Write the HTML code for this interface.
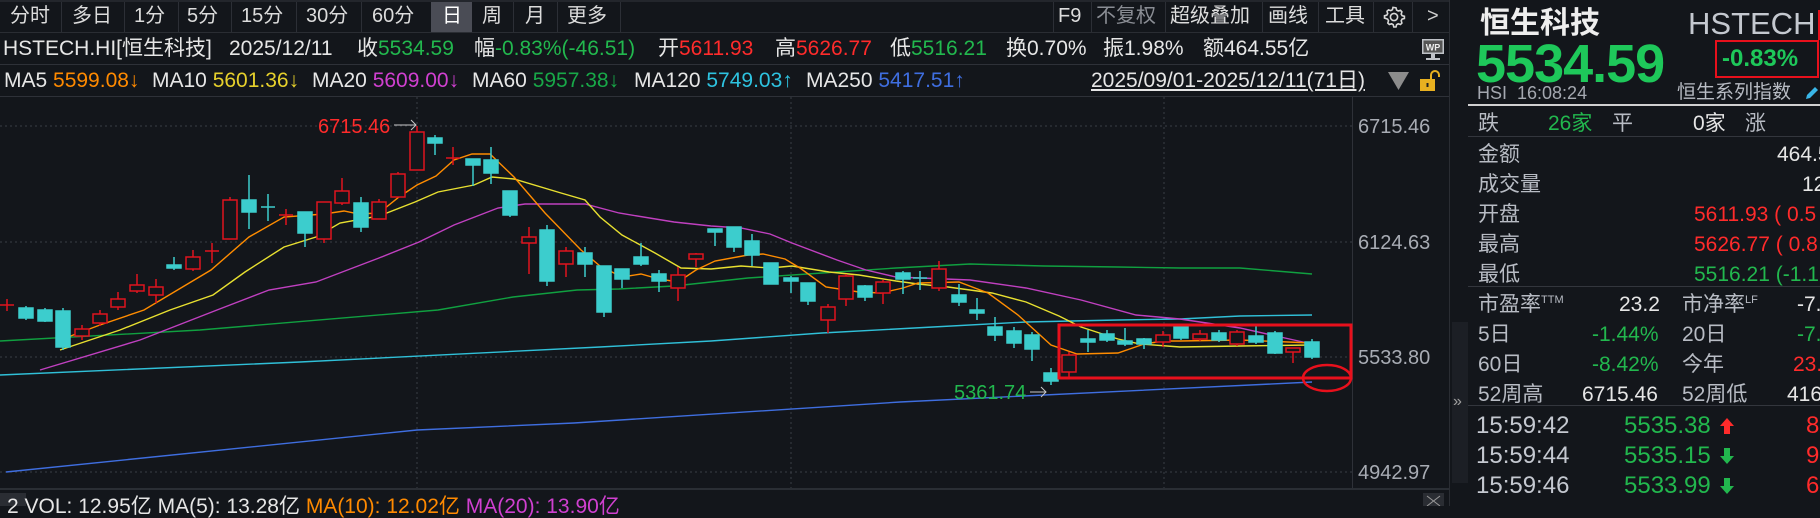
<!DOCTYPE html>
<html><head><meta charset="utf-8">
<style>
*{margin:0;padding:0;box-sizing:border-box}
body{width:1820px;height:506px;background:#13161b;overflow:hidden;position:relative;font-family:"Liberation Sans","Noto Sans CJK SC",sans-serif;color:#e2e2e2}
.a{position:absolute;white-space:nowrap;line-height:1}
.t{font-size:20px;top:6px;color:#dcdcdc}
.r2{font-size:21px;top:38px}
.r3{font-size:21px;top:70px}
.g{color:#22b84e}.rd{color:#ff2b2b}.w{color:#e6e6e6}
.lab{font-size:21px;color:#b8bcc4}
</style></head><body>
<div class="a" style="left:0;top:0;width:1450px;height:2px;background:#23262c"></div>
<div class="a" style="left:431px;top:2px;width:41px;height:30px;background:#4a4c55"></div>
<div class="a t" style="left:10px">分时</div>
<div class="a t" style="left:72px">多日</div>
<div class="a t" style="left:134px">1分</div>
<div class="a t" style="left:187px">5分</div>
<div class="a t" style="left:241px">15分</div>
<div class="a t" style="left:306px">30分</div>
<div class="a t" style="left:372px">60分</div>
<div class="a t" style="left:442px;color:#fff">日</div>
<div class="a t" style="left:482px">周</div>
<div class="a t" style="left:525px">月</div>
<div class="a t" style="left:567px">更多</div>
<div class="a" style="left:61px;top:2px;width:1px;height:30px;background:#2c2f36"></div>
<div class="a" style="left:124px;top:2px;width:1px;height:30px;background:#2c2f36"></div>
<div class="a" style="left:178px;top:2px;width:1px;height:30px;background:#2c2f36"></div>
<div class="a" style="left:231px;top:2px;width:1px;height:30px;background:#2c2f36"></div>
<div class="a" style="left:296px;top:2px;width:1px;height:30px;background:#2c2f36"></div>
<div class="a" style="left:361px;top:2px;width:1px;height:30px;background:#2c2f36"></div>
<div class="a" style="left:513px;top:2px;width:1px;height:30px;background:#2c2f36"></div>
<div class="a" style="left:557px;top:2px;width:1px;height:30px;background:#2c2f36"></div>
<div class="a" style="left:620px;top:2px;width:1px;height:30px;background:#2c2f36"></div>
<div class="a t" style="left:1058px">F9</div>
<div class="a t" style="left:1096px;color:#8a8d94">不复权</div>
<div class="a t" style="left:1170px">超级叠加</div>
<div class="a t" style="left:1268px">画线</div>
<div class="a t" style="left:1325px">工具</div>
<svg class="a" style="left:1382px;top:5px" width="24" height="24" viewBox="0 0 24 24"><path d="M12 2.5l2 .3.6 2.3 1.6.9 2.3-.7 1.4 1.5-.7 2.3.9 1.6 2.3.6v2.2l-2.3.6-.9 1.6.7 2.3-1.4 1.5-2.3-.7-1.6.9-.6 2.3h-2.2l-.6-2.3-1.6-.9-2.3.7-1.5-1.5.7-2.3-.9-1.6L2.5 13v-2.2l2.3-.6.9-1.6-.7-2.3L6.5 4.9l2.3.7 1.6-.9.6-2.3z" fill="none" stroke="#d8d8d8" stroke-width="1.6"/><circle cx="12" cy="12" r="3.6" fill="none" stroke="#d8d8d8" stroke-width="1.6"/></svg>
<div class="a t" style="left:1427px;color:#cfcfcf">&gt;</div>
<div class="a" style="left:1053px;top:2px;width:1px;height:30px;background:#2c2f36"></div>
<div class="a" style="left:1091px;top:2px;width:1px;height:30px;background:#2c2f36"></div>
<div class="a" style="left:1165px;top:2px;width:1px;height:30px;background:#2c2f36"></div>
<div class="a" style="left:1262px;top:2px;width:1px;height:30px;background:#2c2f36"></div>
<div class="a" style="left:1318px;top:2px;width:1px;height:30px;background:#2c2f36"></div>
<div class="a" style="left:1373px;top:2px;width:1px;height:30px;background:#2c2f36"></div>
<div class="a" style="left:1412px;top:2px;width:1px;height:30px;background:#2c2f36"></div>
<div class="a" style="left:0;top:32px;width:1450px;height:1px;background:#2a2d33"></div>
<div class="a" style="left:0;top:64px;width:1450px;height:1px;background:#2e3138"></div>
<div class="a" style="left:0;top:96px;width:1450px;height:1px;background:#2e3138"></div>
<div class="a r2 w" style="left:3px">HSTECH.HI[恒生科技]</div>
<div class="a r2 w" style="left:229px">2025/12/11</div>
<div class="a r2 w" style="left:357px">收<span class="g">5534.59</span></div>
<div class="a r2 w" style="left:474px">幅<span class="g">-0.83%(-46.51)</span></div>
<div class="a r2 w" style="left:658px">开<span class="rd">5611.93</span></div>
<div class="a r2 w" style="left:775px">高<span class="rd">5626.77</span></div>
<div class="a r2 w" style="left:890px">低<span class="g">5516.21</span></div>
<div class="a r2 w" style="left:1006px">换0.70%</div>
<div class="a r2 w" style="left:1103px">振1.98%</div>
<div class="a r2 w" style="left:1203px">额464.55亿</div>
<svg class="a" style="left:1421px;top:38px" width="24" height="24" viewBox="0 0 24 24"><rect x="1" y="1" width="22" height="15" fill="#bfc2c8"/><rect x="2.5" y="2.5" width="19" height="12" fill="#555"/><text x="12" y="12.5" font-size="9" font-weight="bold" fill="#eee" text-anchor="middle" font-family="Liberation Sans">WP</text><rect x="10" y="16" width="4" height="4" fill="#bfc2c8"/><rect x="5" y="20" width="14" height="2" fill="#bfc2c8"/></svg>
<div class="a r3 w" style="left:4px">MA5 <span style="color:#ff8a00">5599.08↓</span></div>
<div class="a r3 w" style="left:152px">MA10 <span style="color:#e6d02c">5601.36↓</span></div>
<div class="a r3 w" style="left:312px">MA20 <span style="color:#d040d0">5609.00↓</span></div>
<div class="a r3 w" style="left:472px">MA60 <span style="color:#18a848">5957.38↓</span></div>
<div class="a r3 w" style="left:634px">MA120 <span style="color:#2ec3e0">5749.03↑</span></div>
<div class="a r3 w" style="left:806px">MA250 <span style="color:#3f6ee0">5417.51↑</span></div>
<div class="a r3 w" style="left:1091px;text-decoration:underline">2025/09/01-2025/12/11(71日)</div>
<svg class="a" style="left:1388px;top:72px" width="21" height="18"><path d="M0 0H21L10.5 18Z" fill="#8c8c8c"/></svg>
<svg class="a" style="left:1419px;top:70px" width="24" height="22"><rect x="1" y="9" width="15" height="12" fill="#e8b020"/><rect x="7.5" y="13" width="2" height="4" fill="#222"/><path d="M12 9V5a4 4 0 0 1 8 0v2" fill="none" stroke="#e8b020" stroke-width="2"/></svg>

<svg class="a" style="left:0;top:0" width="1450" height="506">
<g stroke="#3a3d44" stroke-dasharray="2,3" stroke-width="1">
<line x1="0" y1="126" x2="1352" y2="126"/><line x1="0" y1="242" x2="1352" y2="242"/><line x1="0" y1="357" x2="1352" y2="357"/><line x1="0" y1="472" x2="1352" y2="472"/>
<line x1="417" y1="97" x2="417" y2="488"/><line x1="791" y1="97" x2="791" y2="488"/><line x1="1164" y1="97" x2="1164" y2="488"/>
</g>
<line x1="1352.5" y1="97" x2="1352.5" y2="488" stroke="#2e3138"/>
<line x1="0" y1="489" x2="1450" y2="489" stroke="#33363d" stroke-width="1.5"/>
<line x1="1450.5" y1="0" x2="1450.5" y2="506" stroke="#2a2d33" stroke-width="3"/>
<g font-family="Liberation Sans" font-size="20" fill="#a8acb4">
<text x="1358" y="133">6715.46</text><text x="1358" y="249">6124.63</text><text x="1358" y="364">5533.80</text><text x="1358" y="479">4942.97</text>
</g>
<g fill="none" stroke-width="1.4">
<polyline stroke="#3f6ee0" points="6,472 417,430 574,423 900,402 1312,382"/>
<polyline stroke="#30c0d8" points="0,375 300,362 600,347 711,341 822,333 933,327 1026,322 1118,320 1180,319 1240,316 1312,315"/>
<polyline stroke="#10a040" points="0,341 200,330 438,310 513,297 577,290 619,289 674,286 748,278 822,273 896,268 970,264 1044,266 1118,267 1180,268 1240,268 1312,274"/>
<polyline stroke="#c040c0" points="40,370 140,340 217,310 269,290 316,282 379,258 419,242 454,225 498,208 525,204 585,204 619,213 674,222 711,226 741,228 770,234 792,243 837,260 866,270 896,277 970,280 1026,288 1081,300 1136,315 1180,319 1240,328 1312,344"/>
<polyline stroke="#e8e030" points="60,350 120,330 170,310 213,295 245,272 284,247 316,237 340,223 379,216 415,202 438,192 474,185 492,177 514,179 561,193 585,200 600,217 622,235 655,253 681,268 711,269 741,266 770,268 792,266 829,272 859,275 896,281 918,284 948,287 992,293 1026,302 1059,316 1081,327 1118,339 1140,344 1180,347 1240,346 1312,345"/>
<polyline stroke="#ff8c00" points="60,340 100,325 144,310 211,270 249,237 284,217 324,214 344,211 359,214 379,213 399,197 417,185 436,176 454,160 472,154 490,154 514,177 545,213 581,250 600,266 622,277 641,274 659,279 678,282 696,270 715,261 748,255 763,254 785,259 800,268 826,287 859,292 881,293 903,288 918,283 959,282 988,293 1018,315 1051,345 1077,354 1118,353 1144,344 1163,341 1180,341 1240,340 1312,343"/>
</g>
<g stroke-width="1.5">
<g stroke="#e0141e"><line x1="7" y1="299" x2="7" y2="311"/><line x1="0" y1="305" x2="14" y2="305"/></g>
<g stroke="#3ccdcd" fill="#3ccdcd"><line x1="26" y1="306" x2="26" y2="320"/><rect x="19" y="308" width="14" height="10"/></g>
<g stroke="#3ccdcd" fill="#3ccdcd"><line x1="45" y1="308" x2="45" y2="322"/><rect x="38" y="310" width="14" height="11"/></g>
<g stroke="#3ccdcd" fill="#3ccdcd"><line x1="63" y1="308" x2="63" y2="350"/><rect x="56" y="311" width="14" height="36"/></g>
<g stroke="#e0141e" fill="#13161b"><line x1="82" y1="325" x2="82" y2="340"/><rect x="75" y="329" width="14" height="7"/></g>
<g stroke="#e0141e" fill="#13161b"><line x1="100" y1="310" x2="100" y2="326"/><rect x="93" y="314" width="14" height="9"/></g>
<g stroke="#e0141e" fill="#13161b"><line x1="118" y1="292" x2="118" y2="310"/><rect x="111" y="299" width="14" height="8"/></g>
<g stroke="#e0141e" fill="#13161b"><line x1="137" y1="274" x2="137" y2="293"/><rect x="130" y="285" width="14" height="6"/></g>
<g stroke="#e0141e" fill="#13161b"><line x1="156" y1="279" x2="156" y2="303"/><rect x="149" y="287" width="14" height="8"/></g>
<g stroke="#3ccdcd" fill="#3ccdcd"><line x1="174" y1="257" x2="174" y2="270"/><rect x="167" y="265" width="14" height="3"/></g>
<g stroke="#e0141e" fill="#13161b"><line x1="193" y1="250" x2="193" y2="271"/><rect x="186" y="257" width="14" height="12"/></g>
<g stroke="#e0141e"><line x1="212" y1="243" x2="212" y2="263"/><line x1="205" y1="251" x2="219" y2="251"/></g>
<g stroke="#e0141e" fill="#13161b"><line x1="230" y1="197" x2="230" y2="239"/><rect x="223" y="200" width="14" height="39"/></g>
<g stroke="#3ccdcd" fill="#3ccdcd"><line x1="249" y1="175" x2="249" y2="229"/><rect x="242" y="200" width="14" height="12"/></g>
<g stroke="#3ccdcd"><line x1="268" y1="194" x2="268" y2="221"/><line x1="261" y1="207" x2="275" y2="207"/></g>
<g stroke="#e0141e"><line x1="286" y1="209" x2="286" y2="225"/><line x1="279" y1="215" x2="293" y2="215"/></g>
<g stroke="#3ccdcd" fill="#3ccdcd"><line x1="305" y1="212" x2="305" y2="247"/><rect x="298" y="212" width="14" height="21"/></g>
<g stroke="#e0141e" fill="#13161b"><line x1="324" y1="202" x2="324" y2="243"/><rect x="317" y="202" width="14" height="37"/></g>
<g stroke="#e0141e" fill="#13161b"><line x1="342" y1="178" x2="342" y2="205"/><rect x="335" y="191" width="14" height="12"/></g>
<g stroke="#3ccdcd" fill="#3ccdcd"><line x1="361" y1="197" x2="361" y2="232"/><rect x="354" y="203" width="14" height="24"/></g>
<g stroke="#e0141e" fill="#13161b"><line x1="379" y1="199" x2="379" y2="219"/><rect x="372" y="202" width="14" height="17"/></g>
<g stroke="#e0141e" fill="#13161b"><line x1="398" y1="172" x2="398" y2="197"/><rect x="391" y="174" width="14" height="23"/></g>
<g stroke="#e0141e" fill="#13161b"><line x1="417" y1="126" x2="417" y2="170"/><rect x="410" y="132" width="14" height="38"/></g>
<g stroke="#3ccdcd" fill="#3ccdcd"><line x1="435" y1="135" x2="435" y2="155"/><rect x="428" y="138" width="14" height="5"/></g>
<g stroke="#e0141e"><line x1="453" y1="147" x2="453" y2="165"/><line x1="446" y1="158" x2="460" y2="158"/></g>
<g stroke="#3ccdcd" fill="#3ccdcd"><line x1="473" y1="159" x2="473" y2="186"/><rect x="466" y="159" width="14" height="6"/></g>
<g stroke="#3ccdcd" fill="#3ccdcd"><line x1="491" y1="147" x2="491" y2="184"/><rect x="484" y="160" width="14" height="13"/></g>
<g stroke="#3ccdcd" fill="#3ccdcd"><line x1="510" y1="191" x2="510" y2="217"/><rect x="503" y="191" width="14" height="24"/></g>
<g stroke="#e0141e" fill="#13161b"><line x1="529" y1="227" x2="529" y2="274"/><rect x="522" y="237" width="14" height="6"/></g>
<g stroke="#3ccdcd" fill="#3ccdcd"><line x1="547" y1="225" x2="547" y2="286"/><rect x="540" y="230" width="14" height="51"/></g>
<g stroke="#e0141e" fill="#13161b"><line x1="566" y1="247" x2="566" y2="277"/><rect x="559" y="251" width="14" height="13"/></g>
<g stroke="#3ccdcd" fill="#3ccdcd"><line x1="585" y1="247" x2="585" y2="277"/><rect x="578" y="253" width="14" height="11"/></g>
<g stroke="#3ccdcd" fill="#3ccdcd"><line x1="604" y1="266" x2="604" y2="317"/><rect x="597" y="266" width="14" height="46"/></g>
<g stroke="#3ccdcd" fill="#3ccdcd"><line x1="622" y1="269" x2="622" y2="288"/><rect x="615" y="269" width="14" height="10"/></g>
<g stroke="#3ccdcd" fill="#3ccdcd"><line x1="641" y1="243" x2="641" y2="266"/><rect x="634" y="257" width="14" height="7"/></g>
<g stroke="#3ccdcd" fill="#3ccdcd"><line x1="659" y1="270" x2="659" y2="292"/><rect x="652" y="274" width="14" height="7"/></g>
<g stroke="#e0141e" fill="#13161b"><line x1="678" y1="267" x2="678" y2="301"/><rect x="671" y="275" width="14" height="13"/></g>
<g stroke="#e0141e" fill="#13161b"><line x1="696" y1="253" x2="696" y2="267"/><rect x="689" y="254" width="14" height="5"/></g>
<g stroke="#3ccdcd" fill="#3ccdcd"><line x1="715" y1="229" x2="715" y2="246"/><rect x="708" y="229" width="14" height="3"/></g>
<g stroke="#3ccdcd" fill="#3ccdcd"><line x1="734" y1="227" x2="734" y2="252"/><rect x="727" y="227" width="14" height="20"/></g>
<g stroke="#3ccdcd" fill="#3ccdcd"><line x1="752" y1="234" x2="752" y2="266"/><rect x="745" y="241" width="14" height="14"/></g>
<g stroke="#3ccdcd" fill="#3ccdcd"><line x1="771" y1="263" x2="771" y2="284"/><rect x="764" y="263" width="14" height="21"/></g>
<g stroke="#3ccdcd" fill="#3ccdcd"><line x1="791" y1="276" x2="791" y2="293"/><rect x="784" y="278" width="14" height="3"/></g>
<g stroke="#3ccdcd" fill="#3ccdcd"><line x1="808" y1="283" x2="808" y2="305"/><rect x="801" y="283" width="14" height="18"/></g>
<g stroke="#e0141e" fill="#13161b"><line x1="828" y1="304" x2="828" y2="333"/><rect x="821" y="307" width="14" height="13"/></g>
<g stroke="#e0141e" fill="#13161b"><line x1="846" y1="274" x2="846" y2="306"/><rect x="839" y="276" width="14" height="23"/></g>
<g stroke="#3ccdcd" fill="#3ccdcd"><line x1="865" y1="285" x2="865" y2="301"/><rect x="858" y="286" width="14" height="11"/></g>
<g stroke="#e0141e" fill="#13161b"><line x1="883" y1="280" x2="883" y2="304"/><rect x="876" y="282" width="14" height="11"/></g>
<g stroke="#3ccdcd" fill="#3ccdcd"><line x1="903" y1="271" x2="903" y2="294"/><rect x="896" y="273" width="14" height="6"/></g>
<g stroke="#3ccdcd"><line x1="920" y1="271" x2="920" y2="290"/><line x1="913" y1="278" x2="927" y2="278"/></g>
<g stroke="#e0141e" fill="#13161b"><line x1="939" y1="261" x2="939" y2="291"/><rect x="932" y="269" width="14" height="19"/></g>
<g stroke="#3ccdcd" fill="#3ccdcd"><line x1="959" y1="284" x2="959" y2="306"/><rect x="952" y="295" width="14" height="7"/></g>
<g stroke="#3ccdcd" fill="#3ccdcd"><line x1="977" y1="298" x2="977" y2="320"/><rect x="970" y="310" width="14" height="3"/></g>
<g stroke="#3ccdcd" fill="#3ccdcd"><line x1="995" y1="317" x2="995" y2="341"/><rect x="988" y="327" width="14" height="8"/></g>
<g stroke="#3ccdcd" fill="#3ccdcd"><line x1="1014" y1="327" x2="1014" y2="348"/><rect x="1007" y="331" width="14" height="12"/></g>
<g stroke="#3ccdcd" fill="#3ccdcd"><line x1="1032" y1="332" x2="1032" y2="361"/><rect x="1025" y="335" width="14" height="14"/></g>
<g stroke="#3ccdcd" fill="#3ccdcd"><line x1="1051" y1="368" x2="1051" y2="385"/><rect x="1044" y="373" width="14" height="8"/></g>
<g stroke="#e0141e" fill="#13161b"><line x1="1069" y1="352" x2="1069" y2="377"/><rect x="1062" y="355" width="14" height="17"/></g>
<g stroke="#3ccdcd" fill="#3ccdcd"><line x1="1088" y1="330" x2="1088" y2="352"/><rect x="1081" y="339" width="14" height="3"/></g>
<g stroke="#3ccdcd" fill="#3ccdcd"><line x1="1107" y1="330" x2="1107" y2="342"/><rect x="1100" y="334" width="14" height="6"/></g>
<g stroke="#3ccdcd" fill="#3ccdcd"><line x1="1125" y1="328" x2="1125" y2="346"/><rect x="1118" y="341" width="14" height="3"/></g>
<g stroke="#3ccdcd" fill="#3ccdcd"><line x1="1144" y1="338" x2="1144" y2="349"/><rect x="1137" y="339" width="14" height="5"/></g>
<g stroke="#e0141e" fill="#13161b"><line x1="1163" y1="331" x2="1163" y2="347"/><rect x="1156" y="335" width="14" height="7"/></g>
<g stroke="#3ccdcd" fill="#3ccdcd"><line x1="1181" y1="325" x2="1181" y2="340"/><rect x="1174" y="327" width="14" height="11"/></g>
<g stroke="#e0141e" fill="#13161b"><line x1="1200" y1="330" x2="1200" y2="341"/><rect x="1193" y="334" width="14" height="5"/></g>
<g stroke="#3ccdcd" fill="#3ccdcd"><line x1="1219" y1="330" x2="1219" y2="342"/><rect x="1212" y="333" width="14" height="7"/></g>
<g stroke="#e0141e" fill="#13161b"><line x1="1237" y1="330" x2="1237" y2="346"/><rect x="1230" y="332" width="14" height="12"/></g>
<g stroke="#3ccdcd" fill="#3ccdcd"><line x1="1256" y1="326" x2="1256" y2="344"/><rect x="1249" y="336" width="14" height="6"/></g>
<g stroke="#3ccdcd" fill="#3ccdcd"><line x1="1275" y1="331" x2="1275" y2="354"/><rect x="1268" y="333" width="14" height="20"/></g>
<g stroke="#e0141e" fill="#13161b"><line x1="1293" y1="348" x2="1293" y2="363"/><rect x="1286" y="348" width="14" height="4"/></g>
<g stroke="#3ccdcd" fill="#3ccdcd"><line x1="1312" y1="339" x2="1312" y2="359"/><rect x="1305" y="342" width="14" height="15"/></g>
</g>
<text x="318" y="133" font-family="Liberation Sans" font-size="20" fill="#ff2b2b">6715.46</text>
<path d="M394 125H416M411 120L416 125L411 130" stroke="#c8c8c8" fill="none" stroke-width="1"/>
<text x="954" y="399" font-family="Liberation Sans" font-size="20" fill="#22b84e">5361.74</text>
<path d="M1030 392H1046M1041 387L1046 392L1041 397" stroke="#c8c8c8" fill="none" stroke-width="1"/>
<rect x="1059" y="325" width="292" height="53" fill="none" stroke="#e8101c" stroke-width="3"/>
<ellipse cx="1327" cy="378" rx="24" ry="13" fill="none" stroke="#e8101c" stroke-width="2.5"/>
<rect x="0" y="493" width="26" height="13" fill="#2a2d33"/>
<rect x="1423" y="493" width="21" height="13" fill="#2a2d33"/>
<path d="M1427 496L1440 506M1440 496L1427 506" stroke="#999" stroke-width="1"/>
</svg>
<div class="a" style="left:7px;top:496px;font-size:21px;color:#e6e6e6">2 VOL: 12.95亿 MA(5): 13.28亿 <span style="color:#ff8a00">MA(10): 12.02亿</span> <span style="color:#d040d0">MA(20): 13.90亿</span></div>

<div class="a" style="left:1452px;top:322px;width:16px;height:161px;background:#1c1f25"></div>
<div class="a" style="left:1453px;top:394px;font-size:16px;color:#a0a0a0">»</div>
<div class="a" style="left:1480px;top:9px;font-size:30px;font-weight:bold;color:#eeeeee">恒生科技</div>
<div class="a" style="left:1688px;top:8px;font-size:31px;color:#c4c8cf">HSTECH</div>
<div class="a" style="left:1818px;top:10px;width:2px;height:30px;background:#e8101c"></div>
<div class="a" style="left:1476px;top:37px;font-size:54px;font-weight:bold;color:#1ec85a;letter-spacing:-1px">5534.59</div>
<div class="a" style="left:1715px;top:40px;width:104px;height:38px;border:2px solid #e8101c"></div>
<div class="a" style="left:1722px;top:47px;font-size:24px;font-weight:bold;color:#1ec85a">-0.83%</div>
<div class="a" style="left:1477px;top:84px;font-size:18px;color:#a4a8b0">HSI&nbsp; 16:08:24</div>
<div class="a" style="left:1677px;top:83px;font-size:19px;color:#b8bcc4">恒生系列指数</div>
<svg class="a" style="left:1804px;top:85px" width="16" height="16"><path d="M2 14L3 10L11 2L14 5L6 13Z" fill="#39b6e8"/></svg>
<div class="a" style="left:1468px;top:104px;width:352px;height:2px;background:#d0d0d0"></div>
<div class="a lab" style="left:1478px;top:113px">跌</div>
<div class="a" style="left:1548px;top:113px;font-size:21px;color:#22b84e">26家</div>
<div class="a lab" style="left:1612px;top:113px">平</div>
<div class="a" style="left:1693px;top:113px;font-size:21px;color:#e6e6e6">0家</div>
<div class="a lab" style="left:1745px;top:113px">涨</div>
<div class="a" style="left:1468px;top:136px;width:352px;height:1px;background:#33363d"></div>
<div class="a lab" style="left:1478px;top:144px">金额</div><div class="a w" style="left:1777px;top:144px;font-size:21px">464.55亿</div>
<div class="a lab" style="left:1478px;top:174px">成交量</div><div class="a w" style="left:1802px;top:174px;font-size:21px">12.</div>
<div class="a lab" style="left:1478px;top:204px">开盘</div><div class="a rd" style="left:1694px;top:204px;font-size:21px">5611.93 ( 0.5</div>
<div class="a lab" style="left:1478px;top:234px">最高</div><div class="a rd" style="left:1694px;top:234px;font-size:21px">5626.77 ( 0.8</div>
<div class="a lab" style="left:1478px;top:264px">最低</div><div class="a g" style="left:1694px;top:264px;font-size:21px">5516.21 (-1.1</div>
<div class="a" style="left:1468px;top:286px;width:352px;height:1px;background:#33363d"></div>
<div class="a lab" style="left:1478px;top:294px">市盈率<sup style="font-size:11px">TTM</sup></div><div class="a w" style="left:1619px;top:294px;font-size:21px">23.2</div>
<div class="a lab" style="left:1682px;top:294px">市净率<sup style="font-size:11px">LF</sup></div><div class="a w" style="left:1797px;top:294px;font-size:21px">-7.</div>
<div class="a lab" style="left:1478px;top:324px">5日</div><div class="a g" style="left:1592px;top:324px;font-size:21px">-1.44%</div>
<div class="a lab" style="left:1682px;top:324px">20日</div><div class="a g" style="left:1797px;top:324px;font-size:21px">-7.</div>
<div class="a lab" style="left:1478px;top:354px">60日</div><div class="a g" style="left:1592px;top:354px;font-size:21px">-8.42%</div>
<div class="a lab" style="left:1682px;top:354px">今年</div><div class="a rd" style="left:1793px;top:354px;font-size:21px">23.</div>
<div class="a lab" style="left:1478px;top:384px">52周高</div><div class="a w" style="left:1582px;top:384px;font-size:21px">6715.46</div>
<div class="a lab" style="left:1682px;top:384px">52周低</div><div class="a w" style="left:1787px;top:384px;font-size:21px">4160</div>
<div class="a" style="left:1468px;top:405px;width:352px;height:1px;background:#33363d"></div>
<div class="a" style="left:1476px;top:414px;font-size:24px;color:#c4c8d0">15:59:42</div><div class="a g" style="left:1624px;top:414px;font-size:24px">5535.38</div>
<svg class="a" style="left:1720px;top:418px" width="14" height="16"><path d="M7 0L14 8H10V16H4V8H0Z" fill="#ff2b2b"/></svg><div class="a rd" style="left:1806px;top:414px;font-size:24px">8</div>
<div class="a" style="left:1476px;top:444px;font-size:24px;color:#c4c8d0">15:59:44</div><div class="a g" style="left:1624px;top:444px;font-size:24px">5535.15</div>
<svg class="a" style="left:1720px;top:448px" width="14" height="16"><path d="M7 16L14 8H10V0H4V8H0Z" fill="#22b84e"/></svg><div class="a rd" style="left:1806px;top:444px;font-size:24px">9</div>
<div class="a" style="left:1476px;top:474px;font-size:24px;color:#c4c8d0">15:59:46</div><div class="a g" style="left:1624px;top:474px;font-size:24px">5533.99</div>
<svg class="a" style="left:1720px;top:478px" width="14" height="16"><path d="M7 16L14 8H10V0H4V8H0Z" fill="#22b84e"/></svg><div class="a rd" style="left:1806px;top:474px;font-size:24px">6</div>
</body></html>
